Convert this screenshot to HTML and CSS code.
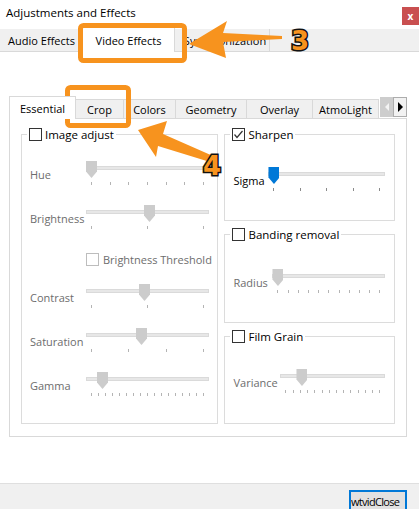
FILE: index.html
```html
<!DOCTYPE html>
<html>
<head>
<meta charset="utf-8">
<link rel="stylesheet" href="styles.css">
</head>
<body>
<div class="window">
  <div class="titlebar">
    <span class="title">Adjustments and Effects</span>
    <span class="close">x</span>
  </div>
  <div class="toptabs">
    <div class="ttab t-audio">Audio Effects</div>
    <div class="ttab sel t-video">Video Effects</div>
    <div class="ttab t-sync">Synchronization</div>
  </div>
  <div class="main">
    <div class="itabs">
      <div class="itab sel w-ess">Essential</div>
      <div class="itab w-crop">Crop</div>
      <div class="itab w-col">Colors</div>
      <div class="itab w-geo">Geometry</div>
      <div class="itab w-ovl">Overlay</div>
      <div class="itab w-atm">AtmoLight</div>
      <div class="scroll">
        <div class="sbtn sleft"><span class="tri-l"></span></div>
        <div class="sbtn sright"><span class="tri-r"></span></div>
      </div>
    </div>
    <div class="panel">
      <div class="group gleft">
        <div class="legend"><span class="cb"></span><span>Image adjust</span></div>
        <div class="rows rl">
          <div class="srow">
            <span class="lbl dim">Hue</span>
            <div class="slider wl">
              <div class="track"></div>
              <div class="ticks"><i></i><i></i><i></i><i></i><i></i><i></i><i></i></div>
              <div class="handle" style="left:0px"></div>
            </div>
          </div>
          <div class="srow">
            <span class="lbl dim">Brightness</span>
            <div class="slider wl">
              <div class="track"></div>
              <div class="ticks"><i></i><i></i><i></i></div>
              <div class="handle" style="left:58px"></div>
            </div>
          </div>
          <div class="trow">
            <span class="cb dis"></span><span class="dim">Brightness Threshold</span>
          </div>
          <div class="srow">
            <span class="lbl dim">Contrast</span>
            <div class="slider wl">
              <div class="track"></div>
              <div class="ticks"><i></i><i></i><i></i></div>
              <div class="handle" style="left:53px"></div>
            </div>
          </div>
          <div class="srow">
            <span class="lbl dim">Saturation</span>
            <div class="slider wl">
              <div class="track"></div>
              <div class="ticks"><i></i><i></i><i></i><i></i></div>
              <div class="handle" style="left:50px"></div>
            </div>
          </div>
          <div class="srow">
            <span class="lbl dim">Gamma</span>
            <div class="slider wl">
              <div class="track"></div>
              <div class="ticks"><i></i><i></i><i></i><i></i><i></i><i></i><i></i><i></i><i></i><i></i><i></i><i></i><i></i><i></i><i></i><i></i><i></i></div>
              <div class="handle" style="left:11px"></div>
            </div>
          </div>
        </div>
      </div>
      <div class="rightcol">
        <div class="group g-sharp">
          <div class="legend"><span class="cb"><svg viewBox="0 0 11 11" width="11" height="11"><polyline points="1.5,5.5 4,8.5 9.5,2" fill="none" stroke="#333" stroke-width="1.2"/></svg></span><span>Sharpen</span></div>
          <div class="rows r1">
            <div class="srow">
              <span class="lbl l-sig">Sigma</span>
              <div class="slider w-sig on">
                <div class="track"></div>
                <div class="ticks"><i></i><i></i><i></i><i></i><i></i></div>
                <div class="handle blue" style="left:0px"></div>
              </div>
            </div>
          </div>
        </div>
        <div class="group g-band">
          <div class="legend"><span class="cb"></span><span>Banding removal</span></div>
          <div class="rows r2">
            <div class="srow">
              <span class="lbl dim l-rad">Radius</span>
              <div class="slider w-rad">
                <div class="track"></div>
                <div class="ticks"><i></i><i></i><i></i><i></i><i></i><i></i><i></i><i></i><i></i><i></i><i></i></div>
                <div class="handle" style="left:0px"></div>
              </div>
            </div>
          </div>
        </div>
        <div class="group g-film">
          <div class="legend"><span class="cb"></span><span>Film Grain</span></div>
          <div class="rows r3">
            <div class="srow">
              <span class="lbl dim l-var">Variance</span>
              <div class="slider w-var">
                <div class="track"></div>
                <div class="ticks"><i></i><i></i><i></i><i></i><i></i><i></i><i></i><i></i><i></i><i></i><i></i><i></i><i></i><i></i></div>
                <div class="handle" style="left:16px"></div>
              </div>
            </div>
          </div>
        </div>
      </div>
    </div>
  </div>
  <div class="footer">
    <div class="closebtn"><span class="btxt">wtvidClose</span></div>
  </div>
  <svg class="annot" viewBox="0 0 419 509" width="419" height="509">
    <rect x="80.5" y="25.5" width="104" height="35" rx="3" fill="none" stroke="#f7931e" stroke-width="5"/>
    <polygon points="189,44 227,21 223,33 282,36 282,39 223,42 226,58" fill="#f7931e"/>
    <text x="300" y="50" class="num">3</text>
    <rect x="67.5" y="87.5" width="61" height="38" rx="3" fill="none" stroke="#f7931e" stroke-width="5"/>
    <polygon points="138,130 167,121 163,134 213,156 210,162 158,146 156,157" fill="#f7931e"/>
    <text x="212" y="175" class="num">4</text>
  </svg>
</div>
</body>
</html>
```

FILE: styles.css
```css
* { box-sizing: border-box; }
body {
  margin: 0;
  font-family: "Open Sans", "Noto Sans", sans-serif;
  font-size: 11px;
  color: #000;
  background: #fff;
}
.window {
  position: relative;
  width: 419px;
  height: 509px;
  overflow: hidden;
  display: flex;
  flex-direction: column;
  white-space: nowrap;
}
.titlebar {
  height: 29px;
  display: flex;
  justify-content: space-between;
  align-items: flex-start;
}
.title {
  font-size: 11.5px;
  line-height: 16px;
  padding: 5px 0 0 6px;
}
.close {
  width: 17px;
  height: 18px;
  margin-top: 7px;
  background: #c94f50;
  color: #fff;
  font-size: 10px;
  font-weight: bold;
  display: flex;
  align-items: center;
  justify-content: center;
  line-height: 1;
}
.toptabs {
  height: 23px;
  background: #f0f0f0;
  border-bottom: 1px solid #d9d9d9;
  display: flex;
  align-items: flex-end;
  padding-left: 2px;
}
.ttab {
  height: 22px;
  border-right: 1px solid #d9d9d9;
  display: flex;
  align-items: center;
  justify-content: center;
  font-size: 11px;
}
.ttab.sel {
  height: 25px;
  margin-bottom: -1px;
  background: #fff;
  border: 1px solid #d9d9d9;
  border-bottom: none;
}
.t-audio { width: 80px; }
.t-video { width: 93px; }
.t-sync { width: 95px; padding-left: 6px; }

.main {
  flex: 1;
  padding: 44px 12px 0 9px;
}
.itabs {
  display: flex;
  align-items: flex-end;
  height: 22px;
}
.itab {
  height: 19px;
  background: #f0f0f0;
  border: 1px solid #d9d9d9;
  border-left: none;
  border-bottom: none;
  display: flex;
  align-items: center;
  justify-content: center;
  font-size: 11px;
}
.itab.sel {
  height: 23px;
  margin-bottom: -1px;
  background: #fff;
  border-left: 1px solid #d9d9d9;
  position: relative;
  z-index: 1;
}
.w-ess { width: 67px; }
.w-crop { width: 48px; }
.w-col { width: 52px; }
.w-geo { width: 71px; }
.w-ovl { width: 66px; }
.w-atm { width: 66px; }
.scroll {
  display: flex;
  align-self: flex-start;
  margin: 1px 0 0 1px;
  height: 20px;
}
.sbtn {
  height: 20px;
  display: flex;
  align-items: center;
  justify-content: center;
}
.sleft { width: 13px; background: #cdcdcd; }
.sright { width: 14px; background: #f2f2f2; border: 1px solid #adadad; }
.tri-l {
  width: 0; height: 0;
  border-top: 4px solid transparent;
  border-bottom: 4px solid transparent;
  border-right: 4px solid #f4f4f4;
}
.tri-r {
  width: 0; height: 0;
  border-top: 5px solid transparent;
  border-bottom: 5px solid transparent;
  border-left: 5px solid #000;
}

.panel {
  height: 319px;
  border: 1px solid #d9d9d9;
  padding: 15px 11px 12px;
  display: flex;
  gap: 6px;
}
.group {
  border: 1px solid #dcdcdc;
}
.gleft { width: 198px; height: 290px; }
.rightcol {
  width: 171px;
  display: flex;
  flex-direction: column;
  gap: 13px;
}
.g-sharp { height: 87px; }
.g-band { height: 89px; }
.g-film { height: 88px; }
.legend {
  display: flex;
  align-items: center;
  gap: 3px;
  margin: -9px 0 0 5px;
  padding: 0 2px;
  background: #fff;
  width: max-content;
  height: 16px;
  font-size: 11.5px;
}
.cb {
  width: 13px;
  height: 13px;
  border: 1px solid #333;
  background: #fff;
  display: flex;
  align-items: center;
  justify-content: center;
  flex: none;
}
.cb.dis { border-color: #bdbdbd; }
.dim { color: #6d6d6d; }

.rows { padding-left: 8px; }
.rl { padding-top: 19px; }
.r1 { padding-top: 25px; }
.r2 { padding-top: 27px; }
.r3 { padding-top: 25px; }
.srow {
  display: flex;
  height: 44px;
}
.lbl {
  width: 56px;
  margin-top: 6px;
  line-height: 16px;
  font-size: 11px;
  flex: none;
}
.l-sig { width: 35px; }
.l-rad { width: 39px; }
.l-var { width: 47px; }
.slider {
  position: relative;
  height: 28px;
}
.wl { width: 123px; }
.w-sig { width: 117px; }
.w-rad { width: 113px; }
.w-var { width: 105px; }
.track {
  height: 4px;
  margin-top: 5px;
  background: #e7e7e7;
  border: 1px solid #dadada;
}
.ticks {
  display: flex;
  justify-content: space-between;
  padding: 0 5px;
  margin-top: 12px;
}
.ticks i {
  width: 1px;
  height: 3px;
  background: #b4b4b4;
}
.on .ticks i { background: #8a8a8a; }
.handle {
  position: absolute;
  top: 0;
  width: 11px;
  height: 17px;
  background: #cccccc;
  clip-path: polygon(0 0, 100% 0, 100% 62%, 50% 100%, 0 62%);
}
.handle.blue { background: #0078d7; }
.trow {
  display: flex;
  gap: 4px;
  height: 35px;
  padding: 4px 0 0 56px;
  align-items: flex-start;
  font-size: 11px;
  line-height: 13px;
}

.footer {
  height: 26px;
  border-top: 1px solid #dfdfdf;
  background: #f0f0f0;
  display: flex;
  justify-content: flex-end;
  padding: 6px 12px 0 0;
}
.closebtn {
  width: 58px;
  height: 23px;
  border: 2px solid #0078d7;
  background: #e1e1e1;
  display: flex;
  align-items: center;
  font-size: 11px;
  overflow: hidden;
}
.btxt { letter-spacing: -0.7px; }

.annot {
  position: absolute;
  left: 0;
  top: 0;
  pointer-events: none;
}
.num {
  font-family: "DejaVu Sans", sans-serif;
  font-weight: bold;
  font-size: 26px;
  fill: #f7931e;
  stroke: #111;
  stroke-width: 3;
  paint-order: stroke;
  text-anchor: middle;
}
```
